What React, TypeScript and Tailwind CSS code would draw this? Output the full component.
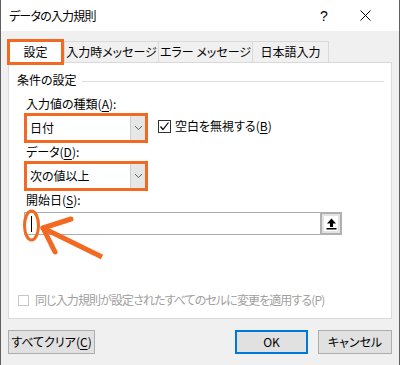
import React from "react";

const ORANGE = "#f26a21";

function Chevron() {
  return (
    <svg width="9" height="6" viewBox="0 0 9 6">
      <polyline points="1,1 4.5,4.5 8,1" fill="none" stroke="#606060" strokeWidth="1" />
    </svg>
  );
}

function Combo({ text }: { text: string }) {
  return (
    <div className="flex h-[30px] w-[124px] border-[3px] border-[#f26a21] bg-white">
      <div className="flex flex-1 items-center pl-[3px] text-[12px] text-black">{text}</div>
      <div className="flex w-[15px] items-center justify-center border-l border-[#cfcfcf] bg-[#e6e6e6]">
        <Chevron />
      </div>
    </div>
  );
}

function U({ c }: { c: string }) {
  return <span className="underline underline-offset-2">{c}</span>;
}

export default function App() {
  return (
    <div
      className="relative flex h-[365px] w-[400px] flex-col overflow-hidden border-x border-[#5f5f5f] bg-[#f0f0f0] text-black [font-feature-settings:'palt']"
      style={{ fontFamily: '"Noto Sans CJK JP", "Noto Sans", sans-serif' }}
    >
      {/* title bar */}
      <div className="flex h-[31px] items-center bg-white">
        <div className="pl-[8px] text-[12px] leading-[16px] tracking-[-0.8px]">データの入力規則</div>
        <div className="flex-1" />
        <div className="w-[30px] text-center text-[14px] leading-[16px]" style={{ fontFamily: '"Liberation Sans", sans-serif' }}>?</div>
        <div className="flex w-[47px] items-center justify-center pl-[6px]">
          <svg width="11" height="11" viewBox="0 0 11 11">
            <line x1="0.5" y1="0.5" x2="10.5" y2="10.5" stroke="#000" strokeWidth="1" />
            <line x1="10.5" y1="0.5" x2="0.5" y2="10.5" stroke="#000" strokeWidth="1" />
          </svg>
        </div>
        <div className="w-[13px]" />
      </div>

      {/* body */}
      <div className="flex flex-1 flex-col pl-[6px] pr-[7px] pt-[8px]">
        {/* tabs */}
        <div className="flex h-[23px] items-end">
          <div className="relative z-10 mb-[-3px] flex h-[26px] w-[57px] items-center justify-center border-[3px] border-[#f26a21] bg-white text-[12px]">
            設定
          </div>
          <div className="flex h-[21px] w-[95px] items-center justify-center border border-b-0 border-[#d9d9d9] text-[12px]">
            入力時メッセージ
          </div>
          <div className="flex h-[21px] w-[94px] items-center justify-center border border-b-0 border-l-0 border-[#d9d9d9] text-[12px]">
            エラー メッセージ
          </div>
          <div className="flex h-[21px] w-[76px] items-center justify-center border border-b-0 border-l-0 border-[#d9d9d9] text-[12px]">
            日本語入力
          </div>
        </div>

        {/* panel */}
        <div className="ml-[1px] flex h-[257px] w-[384px] flex-col border border-[#d9d9d9] bg-white">
          <div className="mt-[9px] flex items-center pl-[8px]">
            <div className="text-[12px] leading-[16px]">条件の設定</div>
            <div className="ml-[5px] mr-[7px] mt-[3px] h-px flex-1 bg-[#dcdcdc]" />
          </div>

          <div className="mt-[8px] pl-[17px] text-[12px] leading-[16px]">
            入力値の種類(<U c="A" />):
          </div>
          <div className="mt-[1px] flex items-start pl-[15px]">
            <Combo text="日付" />
            <div className="ml-[10px] mt-[5px] flex h-[16px] items-center">
              <div className="flex h-[13px] w-[13px] items-center justify-center border border-[#333] bg-white">
                <svg width="11" height="11" viewBox="0 0 11 11">
                  <polyline points="1.5,5.5 4,8.5 9.5,1.5" fill="none" stroke="#000" strokeWidth="1.2" />
                </svg>
              </div>
              <div className="ml-[4px] text-[12px] leading-[16px]">
                空白を無視する(<U c="B" />)
              </div>
            </div>
          </div>

          <div className="mt-[1px] pl-[17px] text-[12px] leading-[16px]">
            データ(<U c="D" />):
          </div>
          <div className="mt-[1px] pl-[15px]">
            <Combo text="次の値以上" />
          </div>

          <div className="mt-[1px] pl-[17px] text-[12px] leading-[16px]">
            開始日(<U c="S" />):
          </div>
          <div className="mt-[4px] flex h-[23px] w-[318px] ml-[15px] border border-[#ababab] bg-white">
            <div className="flex-1" />
            <div className="flex w-[22px] items-center justify-center border-l-2 border-[#b0b0b0] bg-[#e3e3e3] p-[2px] -my-px -mr-px border-y-2 border-r-2">
              <div className="flex h-full w-full items-center justify-center bg-white">
                <svg width="11" height="12" viewBox="0 0 11 12">
                  <polygon points="5.5,0.5 10,5.5 7,5.5 7,9 4,9 4,5.5 1,5.5" fill="#000" />
                  <rect x="0.5" y="10" width="10" height="1.5" fill="#000" />
                </svg>
              </div>
            </div>
          </div>

          <div className="mt-[57px] flex items-center pl-[9px]">
            <div className="h-[11px] w-[11px] border border-[#c6c6c6] bg-white" />
            <div className="ml-[6px] text-[12px] leading-[16px] tracking-[-0.9px] text-[#a0a0a0]">
              同じ入力規則が設定されたすべてのセルに変更を適用する(P)
            </div>
          </div>
        </div>

        {/* buttons */}
        <div className="mt-[11px] flex items-center">
          <div className="ml-[1px] flex h-[24px] w-[87px] items-center justify-center border border-[#adadad] bg-[#e1e1e1] text-[12px]">
            すべてクリア(<U c="C" />)
          </div>
          <div className="flex-1" />
          <div className="flex h-[24px] w-[73px] items-center justify-center border-2 border-[#0078d7] bg-[#e1e1e1] text-[12px]">
            OK
          </div>
          <div className="ml-[10px] flex h-[24px] w-[74px] items-center justify-center border border-[#adadad] bg-[#e1e1e1] text-[12px]">
            キャンセル
          </div>
        </div>
      </div>

      {/* annotation overlay: cursor, ellipse, arrow */}
      <svg className="pointer-events-none absolute left-0 top-0" width="400" height="365" viewBox="0 0 400 365">
        <line x1="30.5" y1="216" x2="30.5" y2="232" stroke="#000" strokeWidth="1" />
        <ellipse cx="30.5" cy="225.5" rx="7" ry="14.5" fill="none" stroke={ORANGE} strokeWidth="3" />
        <line x1="42" y1="228" x2="101" y2="257" stroke={ORANGE} strokeWidth="5" />
        <line x1="42" y1="228" x2="70" y2="219" stroke={ORANGE} strokeWidth="5" strokeLinecap="round" />
        <line x1="42" y1="228" x2="54" y2="252" stroke={ORANGE} strokeWidth="5" strokeLinecap="round" />
      </svg>
    </div>
  );
}
